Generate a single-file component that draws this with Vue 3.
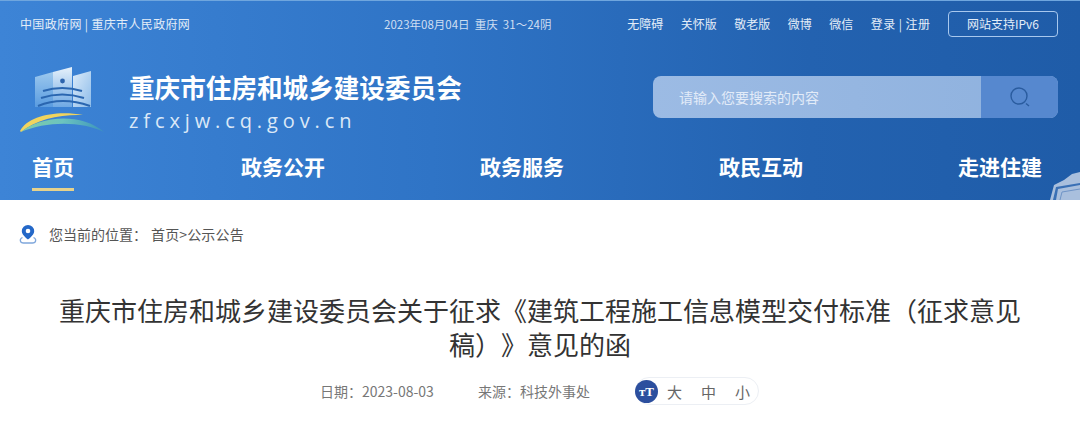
<template>
  <div class="page">
    <header class="site-header">
      <div class="top-bar">
        <div class="top-left">中国政府网 | 重庆市人民政府网</div>
        <div class="top-date">2023年08月04日 &nbsp;重庆&nbsp; 31～24阴</div>
        <div class="top-right">
          <a v-for="link in topLinks" :key="link">{{ link }}</a>
          <a class="login">登录 | 注册</a>
          <span class="ipv6">网站支持IPv6</span>
        </div>
      </div>

      <div class="brand-row">
        <div class="brand">
          <svg class="logo" width="84" height="68" viewBox="0 0 84 68">
            <defs>
              <linearGradient id="bldL" x1="0" y1="0" x2="0" y2="1">
                <stop offset="0" stop-color="#9cc8ee" />
                <stop offset="1" stop-color="#5a9ce0" />
              </linearGradient>
              <linearGradient id="bldM" x1="0" y1="0" x2="0" y2="1">
                <stop offset="0" stop-color="#e6f1fb" />
                <stop offset="1" stop-color="#6fa9e4" />
              </linearGradient>
              <linearGradient id="bldR" x1="0" y1="0" x2="1" y2="1">
                <stop offset="0" stop-color="#dcebf9" />
                <stop offset="1" stop-color="#8dbcea" />
              </linearGradient>
              <linearGradient id="swoosh" x1="0" y1="0" x2="1" y2="0">
                <stop offset="0" stop-color="#7fcba6" />
                <stop offset="0.5" stop-color="#6cc4bf" />
                <stop offset="1" stop-color="#3b93bc" />
              </linearGradient>
            </defs>
            <path d="M15 10 L33 5 L33 40 L15 40Z" fill="url(#bldL)" />
            <path d="M33 5 L52 0 L52 40 L33 40Z" fill="url(#bldM)" />
            <path d="M53 9 L71 4 L71 40 L53 40Z" fill="url(#bldR)" />
            <circle cx="42.5" cy="14" r="2.4" fill="#2d64ad" />
            <g fill="none" stroke="#2a66b0" stroke-width="2">
              <path d="M23 24 Q42 18 62 24" />
              <path d="M21 31 Q42 24 64 31" />
              <path d="M18 39 Q42 29 70 39" />
            </g>
            <path d="M0 64 C8 49 36 43 63 48 C42 47 16 52 1 65Z" fill="#f0d45e" />
            <path d="M1 65 C18 50 60 44 84 65 C62 54 26 54 1 65Z" fill="url(#swoosh)" />
          </svg>
          <div class="brand-text">
            <div class="brand-name">重庆市住房和城乡建设委员会</div>
            <div class="brand-domain">zfcxjw.cq.gov.cn</div>
          </div>
        </div>
        <div class="search">
          <span class="search-hint">请输入您要搜索的内容</span>
          <span class="search-btn">
            <svg width="24" height="24" viewBox="0 0 24 24" fill="none" stroke="#2a5c9f" stroke-width="1.4">
              <circle cx="11" cy="11" r="8" />
              <path d="M18 18.5 L21 21" />
            </svg>
          </span>
        </div>
      </div>

      <nav class="main-nav">
        <a v-for="(item, i) in navItems" :key="item" :class="{ active: i === 0 }">{{ item }}</a>
      </nav>

      <svg class="corner-art" width="30" height="28" viewBox="0 0 30 28">
        <path d="M0 28 L4 13 L14 8 L22 2 L30 0 L30 28Z" fill="#a9bfdd" />
        <path d="M3 28 L6 15 L30 11 L30 13 L8 17 L6 28Z" fill="#3a70b5" />
        <path d="M10 28 L12 20 L30 17" fill="none" stroke="#6f94c6" stroke-width="1" />
      </svg>
    </header>

    <div class="crumbs">
      <svg width="18" height="20" viewBox="0 0 18 20">
        <path d="M9 1 A6.2 6.2 0 0 0 2.8 7.2 C2.8 11 9 15.5 9 15.5 C9 15.5 15.2 11 15.2 7.2 A6.2 6.2 0 0 0 9 1Z" fill="#2468c8" />
        <circle cx="9" cy="7" r="2.3" fill="#fff" />
        <path d="M3.5 13.5 C0 15 1 19 4.5 19 H13.5 C17 19 18 15 14.5 13.5" fill="none" stroke="#7fa7dc" stroke-width="1.3" />
      </svg>
      <span class="crumbs-label">您当前的位置：</span>
      <span class="crumbs-path">首页&gt;公示公告</span>
    </div>

    <main class="article">
      <h1>重庆市住房和城乡建设委员会关于征求《建筑工程施工信息模型交付标准（征求意见稿）》意见的函</h1>
      <div class="meta">
        <span class="meta-date">日期：2023-08-03</span>
        <span class="meta-source">来源：科技外事处</span>
        <span class="font-size">
          <span class="font-icon">тT</span>
          <span>大</span>
          <span>中</span>
          <span>小</span>
        </span>
      </div>
    </main>
  </div>
</template>

<script setup>
const topLinks = ['无障碍', '关怀版', '敬老版', '微博', '微信']
const navItems = ['首页', '政务公开', '政务服务', '政民互动', '走进住建']
</script>

<style>
html, body {
  margin: 0;
  background: #fff;
  overflow: hidden;
}
</style>

<style scoped>
.page {
  width: 1080px;
  height: 425px;
  overflow: hidden;
  font-family: "Noto Sans CJK SC", "Liberation Sans", sans-serif;
  color: #555;
}

.site-header {
  position: relative;
  height: 200px;
  box-sizing: border-box;
  border-top: 1px solid #6fa6de;
  background: linear-gradient(90deg, #3d84d6 0%, #2f74c6 40%, #2362b0 75%, #1f5ca8 100%);
  color: #fff;
  overflow: hidden;
}

.top-bar {
  display: flex;
  align-items: center;
  height: 25px;
  margin-top: 10px;
  padding: 0 22px 0 20px;
  font-size: 12px;
  color: #e3edf8;
}

.top-left {
  width: 364px;
  letter-spacing: 0.35px;
}

.top-date {
  flex: 1;
  font-size: 11.5px;
  color: #cfdff2;
  white-space: nowrap;
}

.top-right {
  display: flex;
  align-items: center;
}

.top-right a {
  margin-right: 17.5px;
}

.top-right a.login {
  letter-spacing: 0.45px;
}

.ipv6 {
  width: 110px;
  height: 26px;
  box-sizing: border-box;
  border: 1px solid #a8c8ee;
  border-radius: 4px;
  text-align: center;
  line-height: 24px;
  white-space: nowrap;
}

.brand-row {
  display: flex;
  align-items: center;
  justify-content: space-between;
  padding: 0 22px 0 20px;
  margin-top: 30px;
}

.brand {
  display: flex;
  align-items: center;
  gap: 25px;
}

.logo {
  display: block;
}

.brand-text {
  padding-top: 4px;
}

.brand-name {
  font-size: 25.6px;
  line-height: 34px;
  font-weight: 700;
  white-space: nowrap;
}

.brand-domain {
  font-family: "Open Sans", "Liberation Sans", sans-serif;
  font-size: 20px;
  line-height: 28px;
  margin-top: 3px;
  letter-spacing: 4.9px;
  color: #dbe8f7;
}

.search {
  display: flex;
  width: 405px;
  height: 42px;
  border-radius: 8px;
  overflow: hidden;
  background: linear-gradient(90deg, #9cbbe4, #8eb1de);
  margin-top: -8px;
}

.search-hint {
  flex: 1;
  padding-left: 26px;
  font-size: 14px;
  line-height: 42px;
  color: #e2ebf8;
}

.search-btn {
  display: flex;
  align-items: center;
  justify-content: center;
  width: 77px;
  background: #5688cf;
}

.main-nav {
  display: grid;
  grid-template-columns: 209px repeat(4, 239px);
  justify-items: start;
  padding-left: 32px;
  margin-top: 16px;
}

.main-nav a {
  position: relative;
  height: 40px;
  font-size: 21px;
  line-height: 30px;
  font-weight: 700;
  white-space: nowrap;
}

.main-nav a.active::after {
  content: "";
  position: absolute;
  left: 0;
  right: 0;
  bottom: 0;
  height: 3px;
  background: #e6d28c;
}

.corner-art {
  position: absolute;
  right: 0;
  bottom: 0;
}

.crumbs {
  display: flex;
  align-items: center;
  height: 67px;
  padding-left: 19px;
  font-size: 14px;
  color: #555;
}

.crumbs svg {
  margin-right: 12px;
}

.crumbs-label {
  margin-right: 4px;
}

.crumbs-path {
  letter-spacing: 0.15px;
}

.article h1 {
  width: 980px;
  margin: 26px auto 0;
  font-size: 26px;
  line-height: 34px;
  font-weight: 400;
  text-align: center;
  color: #333;
  text-spacing-trim: space-all;
}

.meta {
  display: flex;
  align-items: center;
  margin-top: 16px;
  padding-left: 320px;
  font-size: 14px;
  color: #777;
}

.meta-date {
  width: 158px;
}

.meta-source {
  width: 157px;
}

.font-size {
  display: flex;
  align-items: center;
  width: 124px;
  height: 28px;
  box-sizing: border-box;
  border: 1px solid #eceff4;
  border-radius: 14px;
  gap: 19px;
  font-size: 15px;
  color: #666;
}

.font-icon {
  width: 23px;
  height: 23px;
  margin-left: -1px;
  margin-right: -10px;
  border-radius: 50%;
  background: #2c4f9e;
  color: #fff;
  font-family: "Liberation Serif", serif;
  font-weight: 700;
  font-size: 13px;
  line-height: 23px;
  text-align: center;
}
</style>
